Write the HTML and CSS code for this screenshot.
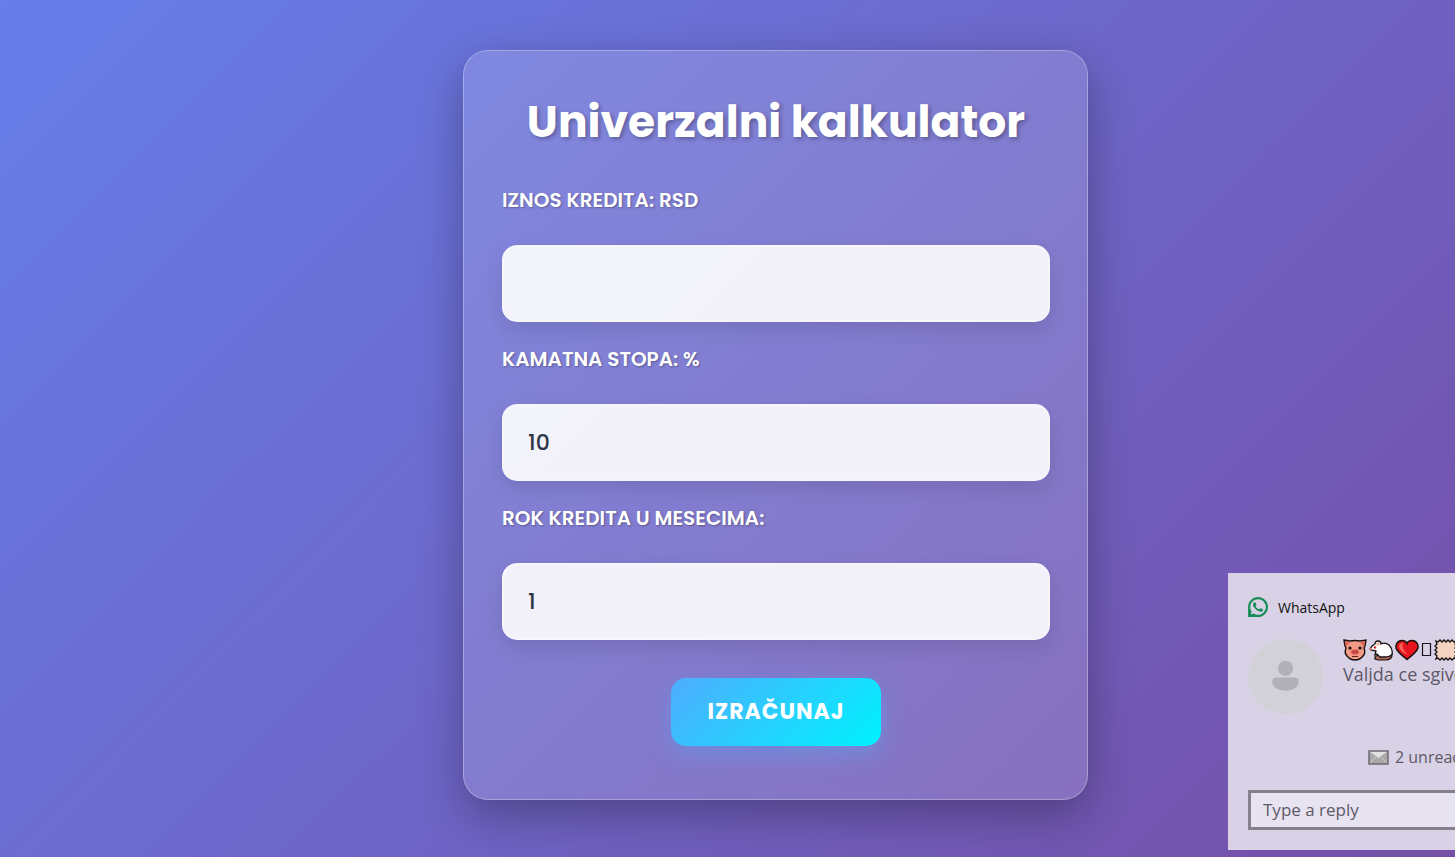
FILE: index.html
```html
<!DOCTYPE html>
<html lang="sr-Latn">
<head>
<meta charset="utf-8">
<meta name="viewport" content="width=device-width, initial-scale=1">
<title>Univerzalni kalkulator</title>
<link rel="stylesheet" href="styles.css">
</head>
<body>
<main class="page">
  <form class="card">
    <h1 class="title">Univerzalni kalkulator</h1>
    <div class="field">
      <label class="label" for="amount">Iznos kredita: RSD</label>
      <input class="input" id="amount" type="text" inputmode="decimal">
    </div>
    <div class="field">
      <label class="label" for="rate">Kamatna stopa: %</label>
      <input class="input" id="rate" type="text" inputmode="decimal" value="10">
    </div>
    <div class="field">
      <label class="label" for="months">Rok kredita u mesecima:</label>
      <input class="input" id="months" type="text" inputmode="numeric" value="1">
    </div>
    <button class="submit" type="button">Izračunaj</button>
  </form>
</main>

<aside class="toast" aria-label="WhatsApp">
  <header class="toast-head">
    <svg class="toast-logo" viewBox="0 0 24 24" aria-hidden="true"><path fill="#168c56" d="M17.472 14.382c-.297-.149-1.758-.867-2.03-.967-.273-.099-.471-.148-.67.15-.197.297-.767.966-.94 1.164-.173.199-.347.223-.644.075-.297-.15-1.255-.463-2.39-1.475-.883-.788-1.48-1.761-1.653-2.059-.173-.297-.018-.458.13-.606.134-.133.298-.347.446-.52.149-.174.198-.298.298-.497.099-.198.05-.371-.025-.52-.075-.149-.669-1.612-.916-2.207-.242-.579-.487-.5-.669-.51-.173-.008-.371-.01-.57-.01-.198 0-.52.074-.792.372-.272.297-1.04 1.016-1.04 2.479 0 1.462 1.065 2.875 1.213 3.074.149.198 2.096 3.2 5.077 4.487.709.306 1.262.489 1.694.625.712.227 1.36.195 1.871.118.571-.085 1.758-.719 2.006-1.413.248-.694.248-1.289.173-1.413-.074-.124-.272-.198-.57-.347M12 0C5.400 0 .1 5.350 .1 11.900V24H12c6.600 0 12-5.500 12-12.100S18.600 0 12 0m0 2.600c5.200 0 9.400 4.200 9.400 9.300s-4.200 9.500-9.400 9.500c-1.900 0-3.700-.5-5.300-1.500l-3.500 1 1.200-3.400c-1.100-1.600-1.700-3.600-1.700-5.600 0-5.100 4.200-9.300 9.300-9.300"/></svg>
    <span>WhatsApp</span>
  </header>
  <div class="toast-body">
    <svg class="avatar" viewBox="0 0 74 74" aria-hidden="true">
      <circle cx="37" cy="37" r="37" fill="#d2d1d7"/>
      <circle cx="37" cy="29" r="7.500" fill="#b1afb8"/>
      <path d="M28 38h18q4 0 4 4c0 6-6 9-13 9s-13-3-13-9q0-4 4-4z" fill="#b1afb8"/>
    </svg>
    <div class="message">
      <div class="sender">
        <svg class="emoji" viewBox="0 0 24 22" role="img" aria-label="prase">
          <path d="M1 1l6 1q5-1 10 0l6-1-1 6-1 2q2 5-1 8-3 4-8 4t-8-4q-3-3-1-8L2 7z" fill="#f29a86" stroke="#17100f" stroke-width="1.400"/>
          <path d="M2 2l5 1-4 5zM22 2l-5 1 4 5z" fill="#df6356"/>
          <circle cx="7" cy="9" r="1.600" fill="#111"/><circle cx="17" cy="9" r="1.600" fill="#111"/>
          <ellipse cx="12" cy="13" rx="4" ry="2.700" fill="#dc5552"/>
          <circle cx="10.500" cy="13" r=".8" fill="#71231f"/><circle cx="13.500" cy="13" r=".8" fill="#71231f"/>
          <path d="M9 17.500h6" stroke="#5d211c"/>
        </svg>
        <svg class="emoji" viewBox="0 0 24 22" role="img" aria-label="miš">
          <path d="M6 20q-1-3 4-4l11 1 2-3q1 7-7 7H9z" fill="#b5695c" stroke="#17100f" stroke-width="1.200"/>
          <path d="M1 10q2-4 5-5 0-3 3-3t3 3q4-2 8 1 4 4 3 9-2 3-7 3h-5l-3-3-2 1 1-4-5-1z" fill="#fff" stroke="#17100f" stroke-width="1.300"/>
          <circle cx="9" cy="5" r="1.800" fill="#f5b7aa"/><circle cx="6" cy="8.500" r="1.200" fill="#d82b28"/><circle cx="1.700" cy="10" r="1.200" fill="#e08072"/>
        </svg>
        <svg class="emoji" viewBox="0 0 24 22" role="img" aria-label="srce">
          <path d="M12 20.500Q5 15 2 11C-1 6 3 1.500 7 1.500q4 0 5 3 1-3 5-3c4 0 8 4.500 5 9.500q-3 4-10 9.500z" fill="#e9141f" stroke="#17100f" stroke-width="1.500"/>
          <path d="M4 7q1-3 4-3-2 5 5 12Q4 12 4 7z" fill="#f4655a"/>
        </svg>
        <svg class="tofu" viewBox="0 0 11 22" aria-hidden="true"><path d="M1.500 4.500h8v12h-8z" fill="none" stroke="#17131b" stroke-width="1.200"/></svg>
        <svg class="emoji" viewBox="0 0 24 22" aria-hidden="true"><path d="M2 2l2 1 2-2 2 2 2-2 2 2 2-2 2 2 2-2 2 2 2-1-1 3 2 2-2 2 2 2-2 2 2 2-2 2 1 3-2-1-2 2-2-2-2 2-2-2-2 2-2-2-2 2-2-2-2 1 1-3-2-2 2-2-2-2 2-2-2-2 2-2z" fill="#f5d3c1" stroke="#17100f" stroke-width="1.300"/></svg>
      </div>
      <p class="text">Valjda ce sgive</p>
    </div>
  </div>
  <div class="unread">
    <svg class="mail" viewBox="0 0 21 15" aria-hidden="true">
      <path d="M1 1h19v13H1z" fill="#aaa9aa"/>
      <path d="M1 14l7-7M20 14l-7-7" stroke="#cac9cb"/>
      <path d="M1 1h19l-9.500 7z" fill="#e3e2e4"/>
      <path d="M1 1h19v13H1z" fill="none" stroke="#6d6973" stroke-width="1.500"/>
    </svg>
    <span>2 unread</span>
  </div>
  <input class="reply" type="text" placeholder="Type a reply" aria-label="Type a reply">
</aside>
</body>
</html>
```
FILE: styles.css
```css
* {
  box-sizing: border-box;
}

body {
  margin: 0;
  min-height: 100vh;
  font-family: Poppins, Inter, "Open Sans", sans-serif;
  background: linear-gradient(135deg, #667eea 0%, #764ba2 108%);
}

.page {
  display: flex;
  justify-content: center;
  padding: 50px 0 50px 96px;
}

.card {
  display: flex;
  flex-direction: column;
  width: 100%;
  max-width: 625px;
  padding: 39px 37px 53px 38px;
  border: 1px solid rgba(255, 255, 255, 0.3);
  border-radius: 25px;
  background: rgba(255, 255, 255, 0.15);
  box-shadow: 0 15px 45px rgba(0, 0, 0, 0.3);
}

.title {
  margin: 0 0 31px;
  font-size: 44px;
  font-weight: 700;
  line-height: 64px;
  text-align: center;
  white-space: nowrap;
  color: #fff;
  text-shadow: 2px 2px 4px rgba(0, 0, 0, 0.3);
}

.field {
  display: flex;
  flex-direction: column;
  gap: 30px;
  margin-bottom: 22px;
}

.label {
  font-size: 20px;
  font-weight: 600;
  line-height: 30px;
  text-transform: uppercase;
  color: #fff;
  text-shadow: 1px 1px 2px rgba(0, 0, 0, 0.3);
}

.input {
  width: 100%;
  height: 77px;
  padding: 0 24px;
  border: 2px solid rgba(255, 255, 255, 0.3);
  border-radius: 15px;
  background: rgba(255, 255, 255, 0.9);
  box-shadow: 0 8px 20px rgba(0, 0, 0, 0.1);
  font: 500 22px Poppins, Inter, sans-serif;
  color: #2d3748;
  outline: none;
}

.submit {
  align-self: center;
  margin-top: 16px;
  padding: 17px 37px;
  border: 0;
  border-radius: 15px;
  background: linear-gradient(135deg, #4facfe 0%, #00f2fe 100%);
  box-shadow: 0 8px 25px rgba(79, 172, 254, 0.4);
  font: 700 22px/34px Poppins, Inter, sans-serif;
  letter-spacing: 1px;
  text-transform: uppercase;
  color: #fff;
}

.toast {
  position: fixed;
  right: 0;
  bottom: 7px;
  width: 227px;
  padding: 20px 0 20px 20px;
  overflow: hidden;
  background: #d9d1e6;
  font-family: "Segoe UI", "Open Sans", sans-serif;
  white-space: nowrap;
  color: #5d5966;
}

.toast-head {
  display: flex;
  align-items: center;
  gap: 10px;
  height: 28px;
  font-size: 14px;
  color: #111;
}

.toast-logo {
  width: 20px;
  height: 20px;
}

.toast-body {
  display: flex;
  gap: 20px;
  margin-top: 18px;
}

.avatar {
  flex: none;
  width: 75px;
  height: 75px;
}

.sender {
  display: flex;
  gap: 2px;
  height: 22px;
}

.emoji {
  flex: none;
  width: 24px;
  height: 22px;
}

.tofu {
  flex: none;
  width: 11px;
  height: 22px;
}

.text {
  margin: 0;
  font-size: 18px;
  line-height: 26px;
}

.unread {
  display: flex;
  align-items: center;
  gap: 6px;
  height: 28px;
  margin: 29px 0 19px 120px;
  font-size: 16px;
}

.mail {
  flex: none;
  width: 21px;
  height: 15px;
}

.reply {
  display: block;
  width: 320px;
  height: 40px;
  padding: 0 12px 2px;
  border: 3px solid #85808c;
  border-radius: 0;
  background: #e8e3f1;
  font: 17px "Segoe UI", "Open Sans", sans-serif;
  color: #5d5966;
  outline: none;
}

.reply::placeholder {
  color: #5d5966;
  opacity: 1;
}
```
